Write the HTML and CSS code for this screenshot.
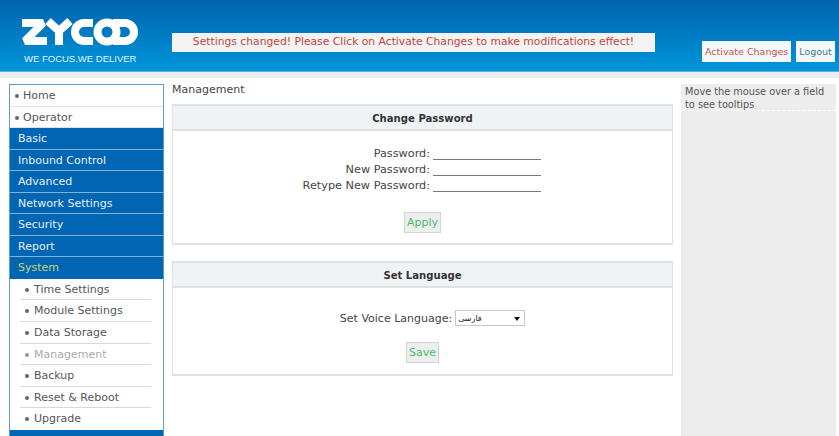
FILE: index.html
```html
<!DOCTYPE html>
<html lang="en">
<head>
  <meta charset="UTF-8" />
  <title>Management</title>
  <link rel="stylesheet" href="styles.css">
</head>
<body>
  <header class="top">
    <div class="brand">
      <svg class="logo" width="118" height="30" viewBox="0 0 118 30" aria-hidden="true">
        <g fill="none" stroke="#fff" stroke-width="8">
          <polyline points="1,5 22,5 4,23 26,23" stroke-linejoin="bevel" />
          <polyline points="27,3 38,13 49,3" stroke-linejoin="bevel" />
          <line x1="38" y1="13" x2="38" y2="27" />
          <path d="M72 5 H63 A9 9 0 0 0 63 23 H72" />
          <circle cx="86" cy="14" r="9.5" />
          <path d="M92 5 H104 A9 9 0 0 1 104 23 H92" />
        </g>
      </svg>
      <div class="tagline">WE FOCUS.WE DELIVER</div>
    </div>
    <div class="notice">Settings changed! Please Click on Activate Changes to make modifications effect!</div>
    <div class="top-btns">
      <a class="top-btn activate">Activate Changes</a>
      <a class="top-btn logout">Logout</a>
    </div>
  </header>
  <div class="strip"></div>

  <div class="page">
    <nav class="menu">
      <a class="leaf">Home</a>
      <a class="leaf">Operator</a>
      <a class="group">Basic</a>
      <a class="group">Inbound Control</a>
      <a class="group">Advanced</a>
      <a class="group">Network Settings</a>
      <a class="group">Security</a>
      <a class="group">Report</a>
      <a class="group open">System</a>
      <a class="sub">Time Settings</a>
      <a class="sub">Module Settings</a>
      <a class="sub">Data Storage</a>
      <a class="sub current">Management</a>
      <a class="sub">Backup</a>
      <a class="sub">Reset &amp; Reboot</a>
      <a class="sub last">Upgrade</a>
      <a class="group"></a>
    </nav>

    <main class="content">
      <div class="crumb">Management</div>

      <section class="panel pw-panel">
        <h2>Change Password</h2>
        <div class="panel-body">
          <div class="rows">
            <label class="row"><span>Password:</span><input type="text"></label>
            <label class="row"><span>New Password:</span><input type="text"></label>
            <label class="row"><span>Retype New Password:</span><input type="text"></label>
          </div>
          <button class="btn" type="button">Apply</button>
        </div>
      </section>

      <section class="panel lang-panel">
        <h2>Set Language</h2>
        <div class="panel-body">
          <div class="lang-row">
            <span>Set Voice Language:</span>
            <span class="fake-select"><span class="fake-value" lang="fa">فارسی</span><i class="arrow"></i></span>
          </div>
          <button class="btn" type="button">Save</button>
        </div>
      </section>
    </main>

    <aside class="tips">
      <div class="tips-text">Move the mouse over a field to see tooltips</div>
    </aside>
  </div>
</body>
</html>
```

FILE: styles.css
```css
html, body {
  height: 100%;
}
body {
  margin: 0;
  height: 436px;
  overflow: hidden;
  background: #fff;
  font-family: "DejaVu Sans", Verdana, sans-serif;
  font-size: 11px;
  color: #444;
}

.top {
  height: 71px;
  display: flex;
  background: linear-gradient(#0063ae, #0095d9);
  border-bottom: 1px solid #4fb3e0;
}
.brand {
  width: 172px;
  flex: none;
  padding: 18px 0 0 21px;
  box-sizing: border-box;
}
.logo {
  display: block;
}
.tagline {
  margin-top: 5px;
  padding-left: 3px;
  font-family: "Liberation Sans", Arial, sans-serif;
  font-size: 9.5px;
  line-height: 12px;
  color: #e2f2fb;
}
.notice {
  width: 483px;
  height: 19px;
  margin-top: 33px;
  flex: none;
  background: #f3f3f3;
  color: #c5433c;
  font-size: 10.75px;
  line-height: 18px;
  text-align: center;
}
.top-btns {
  display: flex;
  gap: 5px;
  margin: 41px 0 0 47px;
}
.top-btn {
  height: 21px;
  padding: 0 3px;
  background: #f4f8fa;
  font-size: 9.5px;
  line-height: 22px;
}
.activate {
  color: #c4554e;
}
.logout {
  color: #3d7f9f;
}

.strip {
  height: 6px;
  background: #ececf0;
}

.page {
  display: flex;
  align-items: flex-start;
  padding: 6px 3px 0 9px;
}

.menu {
  width: 153px;
  flex: none;
  border: 1px solid #5f9dbd;
  border-bottom: none;
  display: flex;
  flex-direction: column;
}
.menu a {
  display: block;
  box-sizing: border-box;
  height: 21.55px;
  line-height: 21px;
}
.leaf {
  padding-left: 13px;
  color: #555;
  border-bottom: 1px solid #dde2e6;
  position: relative;
}
.leaf::before, .sub::before {
  content: "";
  position: absolute;
  width: 4px;
  height: 4px;
  border-radius: 50%;
  background: #666;
  top: 9px;
  left: 5px;
}
.group {
  padding-left: 8px;
  background: #0066b3;
  color: #e6f1f8;
  border-bottom: 1px solid #7fb5d3;
}
.open {
  color: #c3d676;
  border-bottom: none;
}
.sub {
  margin: 0 12px 0 10px;
  padding-left: 14px;
  color: #555;
  border-bottom: 1px solid #d9d9d9;
  position: relative;
}
.current {
  color: #aaa;
}
.current::before {
  background: #999;
}
.last {
  border-bottom: none;
}

.content {
  width: 501px;
  flex: none;
  margin: 0 8px 0 8px;
}
.crumb {
  height: 20px;
  line-height: 12px;
  color: #444;
}
.panel {
  border: 1px solid #dfe2e5;
  border-width: 2px 1px 2px;
  box-sizing: border-box;
  text-align: center;
}
.panel h2 {
  margin: 0;
  height: 25px;
  box-sizing: border-box;
  background: #eff3f6;
  border-bottom: 2px solid #dfe2e5;
  font-size: 10.1px;
  line-height: 25px;
  color: #333;
}
.pw-panel {
  height: 141px;
  margin-bottom: 16px;
}
.lang-panel {
  height: 115px;
}

.rows {
  padding: 14px 0 0 0;
}
.row {
  display: flex;
  height: 16.3px;
  align-items: center;
  font-size: 11.25px;
}
.row span {
  width: 257px;
  text-align: right;
  padding-right: 3px;
}
.row input {
  width: 108px;
  height: 12px;
  padding: 0;
  border: none;
  border-bottom: 1px solid #777;
  background: #fff;
  outline: none;
}
.btn {
  display: block;
  margin: 18px auto 0;
  height: 21px;
  padding: 0 2px;
  background: #ecefee;
  border: 1px solid #d0d4d2;
  font-family: inherit;
  font-size: 11px;
  color: #4cbb6b;
}

.lang-row {
  display: flex;
  justify-content: center;
  align-items: center;
  height: 18px;
  margin: 21px 0 0 20px;
  gap: 3px;
}
.fake-select {
  width: 70px;
  height: 16px;
  box-sizing: border-box;
  border: 1px solid #c9c9c9;
  background: #fff;
  position: relative;
  display: block;
  text-align: left;
  padding-left: 2px;
}
.fake-value {
  font-family: "DejaVu Sans", sans-serif;
  font-size: 8px;
  line-height: 14px;
  color: #222;
}
.arrow {
  position: absolute;
  right: 4px;
  top: 6px;
  border: 3.5px solid transparent;
  border-top: 4px solid #111;
  border-bottom: none;
}
.lang-panel .btn {
  margin-top: 15px;
}

.tips {
  width: 155px;
  flex: none;
  height: 352px;
  background: #ededed;
}
.tips-text {
  padding: 1px 3px 0 4px;
  font-size: 9.75px;
  line-height: 13px;
  height: 25px;
  color: #555;
  border-bottom: 1px dashed #fff;
}
```
